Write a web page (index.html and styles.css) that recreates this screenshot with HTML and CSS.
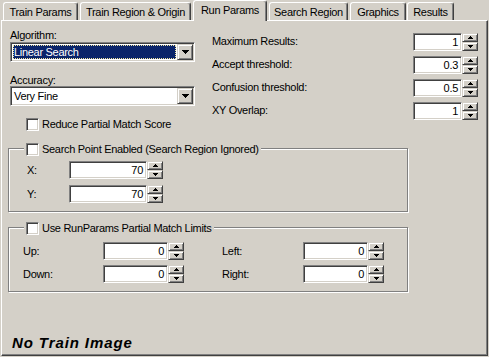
FILE: index.html
```html
<!DOCTYPE html>
<html>
<head>
<meta charset="utf-8">
<link rel="stylesheet" href="styles.css">
</head>
<body>
<div class="tabs">
  <div class="tab t1">Train Params</div>
  <div class="tab t2">Train Region &amp; Origin</div>
  <div class="tab t3 sel">Run Params</div>
  <div class="tab t4">Search Region</div>
  <div class="tab t5">Graphics</div>
  <div class="tab t6">Results</div>
</div>
<div class="panel">
  <div class="top">
    <div class="left">
      <div class="lbl">Algorithm:</div>
      <div class="combo focus">
        <div class="val">Linear Search</div>
        <div class="cbtn"><svg width="7" height="4" shape-rendering="crispEdges"><rect x="0" y="0" width="7" height="1"/><rect x="1" y="1" width="5" height="1"/><rect x="2" y="2" width="3" height="1"/><rect x="3" y="3" width="1" height="1"/></svg></div>
      </div>
      <div class="lbl lbl2">Accuracy:</div>
      <div class="combo c2">
        <div class="val">Very Fine</div>
        <div class="cbtn"><svg width="7" height="4" shape-rendering="crispEdges"><rect x="0" y="0" width="7" height="1"/><rect x="1" y="1" width="5" height="1"/><rect x="2" y="2" width="3" height="1"/><rect x="3" y="3" width="1" height="1"/></svg></div>
      </div>
      <div class="chkrow"><span class="chk"></span><span>Reduce Partial Match Score</span></div>
    </div>
    <div class="right">
      <div class="field"><span class="name">Maximum Results:</span><span class="num">1</span><span class="spin"><i><svg width="5" height="3" shape-rendering="crispEdges"><rect x="2" y="0" width="1" height="1"/><rect x="1" y="1" width="3" height="1"/><rect x="0" y="2" width="5" height="1"/></svg></i><i><svg width="5" height="3" shape-rendering="crispEdges"><rect x="0" y="0" width="5" height="1"/><rect x="1" y="1" width="3" height="1"/><rect x="2" y="2" width="1" height="1"/></svg></i></span></div>
      <div class="field"><span class="name">Accept threshold:</span><span class="num">0.3</span><span class="spin"><i><svg width="5" height="3" shape-rendering="crispEdges"><rect x="2" y="0" width="1" height="1"/><rect x="1" y="1" width="3" height="1"/><rect x="0" y="2" width="5" height="1"/></svg></i><i><svg width="5" height="3" shape-rendering="crispEdges"><rect x="0" y="0" width="5" height="1"/><rect x="1" y="1" width="3" height="1"/><rect x="2" y="2" width="1" height="1"/></svg></i></span></div>
      <div class="field"><span class="name">Confusion threshold:</span><span class="num">0.5</span><span class="spin"><i><svg width="5" height="3" shape-rendering="crispEdges"><rect x="2" y="0" width="1" height="1"/><rect x="1" y="1" width="3" height="1"/><rect x="0" y="2" width="5" height="1"/></svg></i><i><svg width="5" height="3" shape-rendering="crispEdges"><rect x="0" y="0" width="5" height="1"/><rect x="1" y="1" width="3" height="1"/><rect x="2" y="2" width="1" height="1"/></svg></i></span></div>
      <div class="field"><span class="name">XY Overlap:</span><span class="num">1</span><span class="spin"><i><svg width="5" height="3" shape-rendering="crispEdges"><rect x="2" y="0" width="1" height="1"/><rect x="1" y="1" width="3" height="1"/><rect x="0" y="2" width="5" height="1"/></svg></i><i><svg width="5" height="3" shape-rendering="crispEdges"><rect x="0" y="0" width="5" height="1"/><rect x="1" y="1" width="3" height="1"/><rect x="2" y="2" width="1" height="1"/></svg></i></span></div>
    </div>
  </div>

  <div class="group g1">
    <div class="legend"><span class="chk"></span><span>Search Point Enabled (Search Region Ignored)</span></div>
    <div class="row r1"><span class="lab">X:</span><span class="num w78">70</span><span class="spin"><i><svg width="5" height="3" shape-rendering="crispEdges"><rect x="2" y="0" width="1" height="1"/><rect x="1" y="1" width="3" height="1"/><rect x="0" y="2" width="5" height="1"/></svg></i><i><svg width="5" height="3" shape-rendering="crispEdges"><rect x="0" y="0" width="5" height="1"/><rect x="1" y="1" width="3" height="1"/><rect x="2" y="2" width="1" height="1"/></svg></i></span></div>
    <div class="row r2"><span class="lab">Y:</span><span class="num w78">70</span><span class="spin"><i><svg width="5" height="3" shape-rendering="crispEdges"><rect x="2" y="0" width="1" height="1"/><rect x="1" y="1" width="3" height="1"/><rect x="0" y="2" width="5" height="1"/></svg></i><i><svg width="5" height="3" shape-rendering="crispEdges"><rect x="0" y="0" width="5" height="1"/><rect x="1" y="1" width="3" height="1"/><rect x="2" y="2" width="1" height="1"/></svg></i></span></div>
  </div>

  <div class="group g2">
    <div class="legend"><span class="chk"></span><span>Use RunParams Partial Match Limits</span></div>
    <div class="row r1">
      <span class="lab">Up:</span><span class="num w65">0</span><span class="spin"><i><svg width="5" height="3" shape-rendering="crispEdges"><rect x="2" y="0" width="1" height="1"/><rect x="1" y="1" width="3" height="1"/><rect x="0" y="2" width="5" height="1"/></svg></i><i><svg width="5" height="3" shape-rendering="crispEdges"><rect x="0" y="0" width="5" height="1"/><rect x="1" y="1" width="3" height="1"/><rect x="2" y="2" width="1" height="1"/></svg></i></span>
      <span class="lab lab2">Left:</span><span class="num w65">0</span><span class="spin"><i><svg width="5" height="3" shape-rendering="crispEdges"><rect x="2" y="0" width="1" height="1"/><rect x="1" y="1" width="3" height="1"/><rect x="0" y="2" width="5" height="1"/></svg></i><i><svg width="5" height="3" shape-rendering="crispEdges"><rect x="0" y="0" width="5" height="1"/><rect x="1" y="1" width="3" height="1"/><rect x="2" y="2" width="1" height="1"/></svg></i></span>
    </div>
    <div class="row r2">
      <span class="lab">Down:</span><span class="num w65">0</span><span class="spin"><i><svg width="5" height="3" shape-rendering="crispEdges"><rect x="2" y="0" width="1" height="1"/><rect x="1" y="1" width="3" height="1"/><rect x="0" y="2" width="5" height="1"/></svg></i><i><svg width="5" height="3" shape-rendering="crispEdges"><rect x="0" y="0" width="5" height="1"/><rect x="1" y="1" width="3" height="1"/><rect x="2" y="2" width="1" height="1"/></svg></i></span>
      <span class="lab lab2">Right:</span><span class="num w65">0</span><span class="spin"><i><svg width="5" height="3" shape-rendering="crispEdges"><rect x="2" y="0" width="1" height="1"/><rect x="1" y="1" width="3" height="1"/><rect x="0" y="2" width="5" height="1"/></svg></i><i><svg width="5" height="3" shape-rendering="crispEdges"><rect x="0" y="0" width="5" height="1"/><rect x="1" y="1" width="3" height="1"/><rect x="2" y="2" width="1" height="1"/></svg></i></span>
    </div>
  </div>

  <div class="status">No Train Image</div>
</div>
</body>
</html>
```

FILE: styles.css
```css
html, body {
  margin: 0;
  padding: 0;
}
body {
  background: #d4d0c8;
  font-family: "Liberation Sans", Arial, sans-serif;
  font-size: 11px;
  letter-spacing: -0.3px;
  color: #000;
  width: 489px;
  height: 357px;
  overflow: hidden;
}

/* tabs */
.tabs {
  display: flex;
  align-items: flex-start;
  height: 20px;
  padding-left: 3px;
}
.tab {
  box-sizing: border-box;
  height: 18px;
  margin-top: 2px;
  margin-left: 2px;
  border: 1px solid;
  border-bottom: 0;
  border-color: #fff #404040 #fff #fff;
  box-shadow: inset -1px 0 #808080;
  border-radius: 3px 3px 0 0;
  display: flex;
  align-items: center;
  justify-content: center;
  line-height: 11px;
  padding-top: 1px;
  white-space: nowrap;
}
.t1 { width: 75px; margin-left: 0; }
.t2 { width: 111px; }
.t3 { width: 74px; }
.t4 { width: 79px; }
.t5 { width: 56px; }
.t6 { width: 47px; margin-left: 1px; }
.tab.sel {
  height: 21px;
  margin-top: 0;
  padding-top: 0;
  padding-bottom: 2px;
  position: relative;
  z-index: 1;
  background: #d4d0c8;
}

/* panel */
.panel {
  box-sizing: border-box;
  height: 336px;
  margin: 0 1px;
  border: 1px solid;
  border-color: #fff #404040 #404040 #fff;
  box-shadow: inset -1px -1px #808080;
  display: flex;
  flex-direction: column;
}

/* 3D styles */
.combo, .num, .chk {
  box-sizing: border-box;
  background: #fff;
  border: 1px solid;
  border-color: #808080 #fff #fff #808080;
  box-shadow: inset 1px 1px #404040, inset -1px -1px #d4d0c8;
}
.cbtn, .spin i {
  box-sizing: border-box;
  background: #d4d0c8;
  border: 1px solid;
  border-color: #d4d0c8 #404040 #404040 #d4d0c8;
  box-shadow: inset 1px 1px #fff, inset -1px -1px #808080;
  display: flex;
  align-items: center;
  justify-content: center;
}

.top {
  display: flex;
  padding: 9px 0 0 8px;
}
.left {
  width: 185px;
  display: flex;
  flex-direction: column;
}
.lbl {
  line-height: 11px;
  height: 11px;
}
.lbl2 { margin-top: 13px; }
.combo {
  height: 20px;
  margin-top: 1px;
  padding: 1px;
  display: flex;
}
.combo.c2 { margin-top: 0; }
.combo .val {
  flex: 1;
  margin: 1px;
  padding-left: 1px;
  line-height: 14px;
  white-space: nowrap;
}
.combo.focus .val {
  background: #0a246a;
  color: #fff;
  outline: 1px dotted #f0e4a0;
  outline-offset: -1px;
}
.cbtn {
  width: 16px;
  height: 16px;
}
.cbtn svg, .spin svg { display: block; }

.chkrow {
  display: flex;
  align-items: center;
  height: 13px;
  line-height: 13px;
  margin: 12px 0 0 16px;
}
.chk {
  width: 13px;
  height: 13px;
  margin-right: 3px;
  flex: none;
}

.right {
  margin-left: 17px;
  width: 266px;
  padding-top: 3px;
  display: flex;
  flex-direction: column;
  gap: 5px;
}
.field {
  display: flex;
  align-items: center;
  height: 18px;
}
.field .name {
  flex: 1;
  line-height: 13px;
  margin-top: -2px;
}
.num {
  height: 18px;
  width: 49px;
  text-align: right;
  padding: 1px 3px 0 0;
  line-height: 14px;
  flex: none;
}
.num.w78 { width: 78px; }
.num.w65 { width: 65px; }
.spin {
  width: 16px;
  height: 18px;
  display: flex;
  flex-direction: column;
  flex: none;
}
.spin i {
  height: 9px;
}

/* group boxes */
.group {
  margin-left: 6px;
  width: 400px;
  box-sizing: border-box;
  border: 1px solid #808080;
  box-shadow: inset 1px 1px #fff, 1px 1px #fff;
}
.legend {
  display: flex;
  align-items: center;
  width: fit-content;
  height: 13px;
  line-height: 13px;
  margin-top: -6px;
  padding: 0 2px;
  background: #d4d0c8;
  white-space: nowrap;
}
.g1 {
  margin-top: 17px;
  padding: 0 0 8px 18px;
}
.g1 .legend { margin-left: -3px; }
.g2 {
  margin-top: 15px;
  padding: 0 0 8px 14px;
}
.g2 .legend { margin-left: 1px; }
.row {
  display: flex;
  align-items: center;
  height: 18px;
}
.g1 .r1 { margin-top: 5px; }
.g1 .r2 { margin-top: 6px; }
.g2 .r1 { margin-top: 7px; }
.g2 .r2 { margin-top: 5px; }
.lab {
  line-height: 13px;
  flex: none;
}
.g1 .lab { width: 42px; }
.g2 .lab { width: 80px; }
.g2 .lab.lab2 { width: 81px; margin-left: 38px; }

.status {
  margin-top: auto;
  padding: 0 0 5px 10px;
  font-style: italic;
  font-weight: bold;
  font-size: 15px;
  line-height: 15px;
  letter-spacing: 0.9px;
}
```
